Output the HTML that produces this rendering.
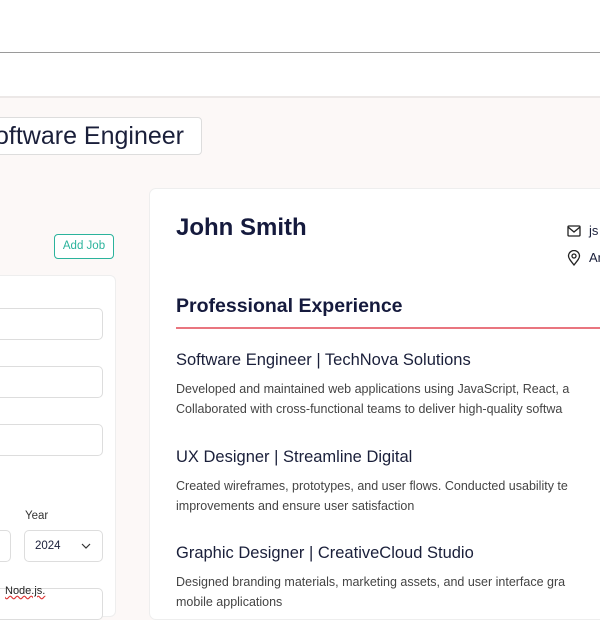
<!DOCTYPE html>
<html><head><style>
body{margin:0;width:600px;height:600px;overflow:hidden;background:#fcf8f7;font-family:"Liberation Sans",sans-serif;color:#1a1f3a;position:relative}
.a{position:absolute}
</style></head><body>
<div class="a" style="left:0;top:0;width:600px;height:52px;background:#fff;border-bottom:1px solid #9a9a9a"></div>
<div class="a" style="left:0;top:53px;width:600px;height:43px;background:#fff;border-bottom:2px solid #ece8e7"></div>
<div class="a" style="left:-10px;top:117px;width:206px;height:36px;background:#fff;border:1px solid #ddd;border-radius:4px;font-size:25px;line-height:37px;padding-left:4px;color:#1a1f3a;white-space:nowrap">oftware Engineer</div>
<div class="a" style="left:54px;top:234px;width:58px;height:23px;border:1.5px solid #2bb39c;border-radius:4px;color:#2bb39c;font-size:11.5px;line-height:23px;text-align:center;background:#fff">Add Job</div>
<div class="a" style="left:-10px;top:275px;width:124px;height:340px;background:#fff;border:1px solid #eee;border-radius:6px"></div>
<div class="a" style="left:-10px;top:308px;width:111px;height:30px;border:1px solid #ddd;border-radius:5px;background:#fff"></div>
<div class="a" style="left:-10px;top:366px;width:111px;height:30px;border:1px solid #ddd;border-radius:5px;background:#fff"></div>
<div class="a" style="left:-10px;top:424px;width:111px;height:30px;border:1px solid #ddd;border-radius:5px;background:#fff"></div>
<div class="a" style="left:25px;top:510px;font-size:11.5px;color:#333">Year</div>
<div class="a" style="left:-10px;top:530px;width:19px;height:30px;border:1px solid #ddd;border-radius:5px;background:#fff"></div>
<div class="a" style="left:24px;top:530px;width:77px;height:30px;border:1px solid #ddd;border-radius:5px;background:#fff;font-size:11.5px;line-height:30px"><span style="margin-left:10px">2024</span>
<svg class="a" style="left:56px;top:11px" width="10" height="8" viewBox="0 0 10 8"><path d="M1 2l4 4 4-4" fill="none" stroke="#333" stroke-width="1.2"/></svg></div>
<div class="a" style="left:-10px;top:588px;width:111px;height:30px;border:1px solid #ddd;border-radius:5px;background:#fff"></div>
<div class="a" style="left:5px;top:585px;font-size:11px;color:#222;text-decoration:underline wavy #d33">Node.js.</div>
<div class="a" style="left:149px;top:188px;width:470px;height:430px;background:#fff;border:1px solid #eee;border-radius:7px"></div>
<div class="a" style="left:176px;top:214px;font-size:24px;font-weight:bold;color:#151a3d">John Smith</div>
<svg class="a" style="left:567px;top:225px" width="14" height="12" viewBox="0 0 14 12"><rect x="1" y="1" width="12" height="10" rx="1" fill="none" stroke="#222" stroke-width="1.3"/><path d="M1 2l6 5 6-5" fill="none" stroke="#222" stroke-width="1.3"/></svg>
<div class="a" style="left:589px;top:223px;font-size:13px">js</div>
<svg class="a" style="left:567px;top:250px" width="14" height="16" viewBox="0 0 14 16"><path d="M7 15C3 10 1.5 8 1.5 6a5.5 5.5 0 0111 0c0 2-1.5 4-5.5 9z" fill="none" stroke="#222" stroke-width="1.3"/><circle cx="7" cy="6" r="2" fill="none" stroke="#222" stroke-width="1.3"/></svg>
<div class="a" style="left:589px;top:250px;font-size:13px">Ar</div>
<div class="a" style="left:176px;top:295px;font-size:19.5px;font-weight:bold;color:#151a3d">Professional Experience</div>
<div class="a" style="left:176px;top:327px;width:430px;height:2px;background:#e9757f"></div>
<div class="a" style="left:176px;top:351px;font-size:16.5px;color:#1a1f3a">Software Engineer | TechNova Solutions</div>
<div class="a" style="left:176px;top:379px;font-size:12.5px;line-height:20px;color:#444;white-space:nowrap">Developed and maintained web applications using JavaScript, React, a<br>Collaborated with cross-functional teams to deliver high-quality softwa</div>
<div class="a" style="left:176px;top:448px;font-size:16.5px;color:#1a1f3a">UX Designer | Streamline Digital</div>
<div class="a" style="left:176px;top:476px;font-size:12.5px;line-height:20px;color:#444;white-space:nowrap">Created wireframes, prototypes, and user flows. Conducted usability te<br>improvements and ensure user satisfaction</div>
<div class="a" style="left:176px;top:544px;font-size:16.5px;color:#1a1f3a">Graphic Designer | CreativeCloud Studio</div>
<div class="a" style="left:176px;top:572px;font-size:12.5px;line-height:20px;color:#444;white-space:nowrap">Designed branding materials, marketing assets, and user interface gra<br>mobile applications</div>
</body></html>
